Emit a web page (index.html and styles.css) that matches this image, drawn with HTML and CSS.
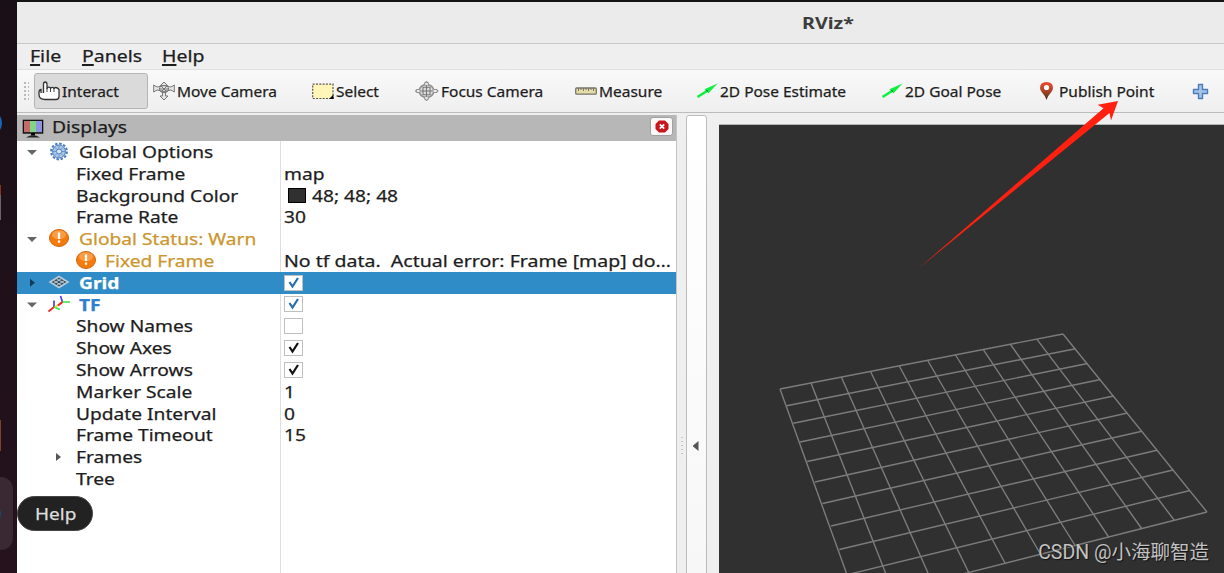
FILE: index.html
```html
<!DOCTYPE html>
<html lang="en">
<head>
    <meta charset="UTF-8">
    <meta name="viewport" content="width=device-width, initial-scale=1.0">
    <title>RViz*</title>
    <link rel="stylesheet" href="styles.css">
</head>
<body>

<div class="desktop">
    <div class="dock">
        <svg width="17" height="573">
            <circle cx="-11" cy="123" r="13" fill="#1668bd"/>
            <path d="M0 185h1v10h-1z" fill="#8a3018"/>
            <path d="M0 195h1v25h-1z" fill="#6a6468"/>
            <path d="M0 420h1v31h-1z" fill="#7c431f"/>
            <rect x="-20" y="477" width="33" height="73" rx="12" fill="#3a2933"/>
            <circle cx="-9" cy="514" r="10" fill="#174a6c"/>
        </svg>
    </div>

    <div class="window">
        <div class="titlebar"><span class="title">RViz*</span></div>
        <div class="menubar">
            <span class="menu file"><u>F</u>ile</span>
            <span class="menu panels"><u>P</u>anels</span>
            <span class="menu help"><u>H</u>elp</span>
        </div>

        <div class="toolbar">
            <span class="grip"></span>
            <div class="tool active">
                <svg width="22" height="20" viewBox="0 0 22 20"><path d="M5.500 12V3.200Q5.500 1 7.200 1T9 3.200V8Q9 6.200 10.800 6.200T12.500 8Q12.500 6.300 14.200 6.300T16 8Q16 6.500 17.700 6.500T21 8.500V15.500Q21 18.500 18 18.500H7Q1 18.500 1 13.500V11Q1 9 3 8.500V12" fill="#fff" stroke="#333" stroke-width="1.300"/><path d="M9 7v4M12.500 7.500v3.500M16 7.500v3.500" stroke="#444"/></svg>
                <span class="label">Interact</span>
            </div>
            <div class="tool">
                <svg width="22" height="20" viewBox="0 0 22 20"><g fill="#e6e6e6" stroke="#777" stroke-width="1"><path d="M11 1L15 5H12.500V15H15L11 19L7 15H9.500V5H7Z"/><path d="M.7 4V11L4 9Q11 12 18 9L21.300 11V4L18 6Q11 3 4 6Z"/><ellipse cx="11" cy="8" rx="4.500" ry="3.500" fill="none"/><path d="M6 8h10M8 5l6 6M14 5l-6 6"/></g></svg>
                <span class="label">Move Camera</span>
            </div>
            <div class="tool">
                <svg width="22" height="20" viewBox="0 0 22 20"><path d="M.7 3.200h20.300v14.300H.7z" fill="#fff6b8" stroke="#555" stroke-width="1.200" stroke-dasharray="2 1.300"/><path d="M21.500 13.500v4.500h-4.500z"/></svg>
                <span class="label">Select</span>
            </div>
            <div class="tool">
                <svg width="24" height="20" viewBox="0 0 24 20"><g fill="none" stroke="#8e8e8e" stroke-width="1.100"><ellipse cx="11.500" cy="10" rx="7.300" ry="6.500" fill="#ddd" stroke-width="1.600"/><path d="M8 6.200h7v7.600H8zM11.500 4v12M5 10h13" stroke="#777"/><path d="M9.700 4V2L11.500.6L13.300 2V4M9.700 16V18L11.500 19.400L13.300 18V16M4.500 8.500H2L.6 10L2 11.500H4.500M18.500 8.500H21.500L23 10L21.500 11.500H18.500" fill="#eee"/></g></svg>
                <span class="label">Focus Camera</span>
            </div>
            <div class="tool">
                <svg width="22" height="20" viewBox="0 0 22 20"><rect x=".7" y="7" width="20.600" height="6.200" rx="1" fill="#e6dca6" stroke="#77746c" stroke-width="1.300"/><path d="M3.500 7v3M6 7v2M8.500 7v3M11 7v2M13.500 7v3M16 7v2M18.500 7v3" stroke="#77746c"/></svg>
                <span class="label">Measure</span>
            </div>
            <div class="tool pose">
                <svg width="22" height="20" viewBox="0 0 22 20"><path d="M1.500 16L11 10" stroke="#0df03c" stroke-width="2.600"/><path d="M21.500 2.500L8.500 8.200L12.500 12.200Z" fill="#0df03c"/><path d="M9.500 9L12.300 11.600L11.500 9Z" fill="#078c28"/></svg>
                <span class="label">2D Pose Estimate</span>
            </div>
            <div class="tool pose">
                <svg width="22" height="20" viewBox="0 0 22 20"><path d="M1.500 16L11 10" stroke="#0df03c" stroke-width="2.600"/><path d="M21.500 2.500L8.500 8.200L12.500 12.200Z" fill="#0df03c"/><path d="M9.500 9L12.300 11.600L11.500 9Z" fill="#078c28"/></svg>
                <span class="label">2D Goal Pose</span>
            </div>
            <div class="tool">
                <svg width="18" height="20" viewBox="0 0 18 20"><defs><linearGradient id="pin" x2="0" y2="1"><stop stop-color="#f0492e"/><stop offset=".45" stop-color="#b44627"/><stop offset="1" stop-color="#47301d"/></linearGradient></defs><path d="M7.500 19Q6.500 15 3 11.500Q1 9.500 1 7Q1 1 7.500 1T14 7Q14 9.500 12 11.500Q8.500 15 7.500 19Z" fill="url(#pin)"/><circle cx="7.500" cy="6.500" r="2.600" fill="#fff"/></svg>
                <span class="label">Publish Point</span>
            </div>
            <div class="tool">
                <svg width="17" height="20" viewBox="0 0 17 20"><path d="M6.500 3.500h4v5h5v4h-5v5h-4v-5h-5v-4h5z" fill="#a5c4e7" stroke="#4c7db9" stroke-width="1.400" stroke-linejoin="round"/></svg>
            </div>
        </div>

        <div class="content">
            <div class="displays">
                <div class="panel-header">
                    <svg width="22" height="19" viewBox="0 0 22 19"><path d="M.7 .7h20.600v14H.7z" fill="#111"/><path d="M2 2h6v11.200H2z" fill="#c56a6a"/><path d="M8 2h6v11.200H8z" fill="#83d483"/><path d="M14 2h6v11.200h-6z" fill="#9292e2"/><path d="M9 14h4v2.500H9z"/><path d="M4 18.500Q11 14 18 18.500Z" fill="#222"/></svg>
                    <span class="label">Displays</span>
                    <span class="close"><svg width="14" height="13" viewBox="0 0 14 13"><path d="M4 .5h6l3.500 3.500v5L10 12.500H4L.5 9V4z" fill="#c9151c"/><path d="M4.800 4.300l4.400 4.400M9.200 4.300L4.800 8.700" stroke="#fff" stroke-width="1.700"/></svg></span>
                </div>
                <div class="tree">
                    <div class="row">
                        <div class="name group"><i class="down"></i>
                            <svg width="20" height="20" viewBox="0 0 20 20"><circle cx="10" cy="9.500" r="7.900" fill="none" stroke="#4c7fbd" stroke-width="2" stroke-dasharray="2.500 1.630"/><circle cx="10" cy="9.500" r="6.500" fill="#a9c4e5" stroke="#4c7fbd"/><circle cx="10" cy="9.500" r="2.500" fill="#d9e7f6" stroke="#4c7fbd"/><path d="M10 3.500v3M10 12.500v3M4 9.500h3M13 9.500h3M6 5.500l2 2M12 11.500l2 2M14 5.500l-2 2M8 11.500l-2 2" stroke="#6d98cc"/></svg>
                            <span class="text">Global Options</span></div>
                        <div class="value"></div>
                    </div>
                    <div class="row"><div class="name"><span class="text">Fixed Frame</span></div><div class="value"><span class="text">map</span></div></div>
                    <div class="row"><div class="name"><span class="text">Background Color</span></div><div class="value"><i class="swatch"></i><span class="text">48; 48; 48</span></div></div>
                    <div class="row"><div class="name"><span class="text">Frame Rate</span></div><div class="value"><span class="text">30</span></div></div>
                    <div class="row warn">
                        <div class="name group"><i class="down"></i>
                            <svg width="20" height="20" viewBox="0 0 20 20"><ellipse cx="10" cy="9" rx="9.500" ry="8.500" fill="#f57a0b" stroke="#cf650c"/><ellipse cx="10" cy="5.800" rx="7" ry="4.500" fill="#fa9c43"/><path d="M10 3.500v6.500M10 11.500v2.300" stroke="#fff" stroke-width="2.300"/></svg>
                            <span class="text">Global Status: Warn</span></div>
                        <div class="value"></div>
                    </div>
                    <div class="row warn">
                        <div class="name child">
                            <svg width="20" height="20" viewBox="0 0 20 20"><ellipse cx="10" cy="9" rx="9.500" ry="8.500" fill="#f57a0b" stroke="#cf650c"/><ellipse cx="10" cy="5.800" rx="7" ry="4.500" fill="#fa9c43"/><path d="M10 3.500v6.500M10 11.500v2.300" stroke="#fff" stroke-width="2.300"/></svg>
                            <span class="text">Fixed Frame</span></div>
                        <div class="value"><span class="text message">No tf data.&nbsp; Actual error: Frame [map] do…</span></div>
                    </div>
                    <div class="row selected">
                        <div class="name group"><i class="right"></i>
                            <svg width="20" height="20" viewBox="0 0 20 20"><path d="M10 3.500L19 9L10 14.500L1 9Z" fill="#3d4f5b" stroke="#b6cbd9" stroke-width="1.600"/><path d="M7 5.300L16 10.800M4 7.200L13 12.700M13 5.300L4 10.800M16 7.200L7 12.700" stroke="#b6cbd9"/></svg>
                            <span class="text bold">Grid</span></div>
                        <div class="value"><span class="check blue"><svg width="14" height="12" viewBox="0 0 14 12"><path d="M2.500 5L5.500 9.500L11 1" fill="none" stroke="currentColor" stroke-width="2.200"/></svg></span></div>
                    </div>
                    <div class="row tf">
                        <div class="name group"><i class="down"></i>
                            <svg width="22" height="20" viewBox="0 0 22 20"><g fill="none" stroke-width="1.700"><path d="M6 13L.5 17.500" stroke="#e22"/><path d="M6 13V6.500M14.500 8L12.500 2" stroke="#4444e8"/><path d="M6 13L12 15.500M14.500 8H22" stroke="#31e545"/><path d="M7 13L14.500 8" stroke="#f2d43c"/><path d="M10 11.500L14.500 8" stroke="#e22" stroke-width="2"/></g></svg>
                            <span class="text bold">TF</span></div>
                        <div class="value"><span class="check blue"><svg width="14" height="12" viewBox="0 0 14 12"><path d="M2.500 5L5.500 9.500L11 1" fill="none" stroke="currentColor" stroke-width="2.200"/></svg></span></div>
                    </div>
                    <div class="row"><div class="name"><span class="text">Show Names</span></div><div class="value"><span class="check"></span></div></div>
                    <div class="row"><div class="name"><span class="text">Show Axes</span></div><div class="value"><span class="check"><svg width="14" height="12" viewBox="0 0 14 12"><path d="M2.500 5L5.500 9.500L11 1" fill="none" stroke="currentColor" stroke-width="2.200"/></svg></span></div></div>
                    <div class="row"><div class="name"><span class="text">Show Arrows</span></div><div class="value"><span class="check"><svg width="14" height="12" viewBox="0 0 14 12"><path d="M2.500 5L5.500 9.500L11 1" fill="none" stroke="currentColor" stroke-width="2.200"/></svg></span></div></div>
                    <div class="row"><div class="name"><span class="text">Marker Scale</span></div><div class="value"><span class="text">1</span></div></div>
                    <div class="row"><div class="name"><span class="text">Update Interval</span></div><div class="value"><span class="text">0</span></div></div>
                    <div class="row"><div class="name"><span class="text">Frame Timeout</span></div><div class="value"><span class="text">15</span></div></div>
                    <div class="row"><div class="name nested"><i class="right"></i><span class="text">Frames</span></div><div class="value"></div></div>
                    <div class="row"><div class="name"><span class="text">Tree</span></div><div class="value"></div></div>
                    <div class="row rest"><div class="name"></div><div class="value"></div></div>
                </div>
            </div>
            <div class="splitter"><span class="dots"></span></div>
            <div class="collapse"><i class="left"></i></div>
            <div class="view">
                <svg width="505" height="448" viewBox="719 125 505 448">
                    <g class="grid-lines">
                        <path d="M780 389L1063 334M786.700 405.700L1075.500 348.700M793.300 423.300L1087.500 363.500M800 442L1100.500 379.500M807.200 461.500L1113.500 396M815 482L1127.500 413M822.500 503.500L1142 431.200M831 526L1157 450.200M839.300 549.500L1173 470M848 574.500L1190 490.500M856.500 601L1207 512"/>
                        <path d="M780 389L856.500 601M811 383L893 592M841.300 377L932 582M870.500 371.500L969 573M899.300 366L1005.500 564M927.700 360.500L1041 555M955.500 355L1075.500 546M983.300 349.700L1109 537.500M1010.500 344.500L1142 529M1037 339.300L1174.500 520.500M1063 334L1207 512"/>
                    </g>
                </svg>
                <div class="watermark">CSDN @小海聊智造</div>
            </div>
        </div>
    </div>

    <div class="tooltip"><span class="label">Help</span></div>
    <svg class="arrow" width="202" height="170" viewBox="918 99 202 170"><path d="M918.500 268.500L1103.500 108.300L1097.700 104.700L1118 101L1111 120.500L1109.500 113Z" fill="#ff2010"/></svg>
</div>

</body>
</html>
```
FILE: styles.css
```css
body {
    margin: 0;
    font-family: "Noto Sans", "Open Sans", sans-serif;
    color: #1d1d1d;
    background-color: #1c0f17;
}
svg {
    display: block;
    flex: none;
}
.desktop {
    position: relative;
    display: flex;
    width: 1224px;
    height: 573px;
    overflow: hidden;
}
.dock {
    width: 17px;
    background: linear-gradient(#190f17, #25121d);
}
.window {
    display: flex;
    flex-direction: column;
    width: 1207px;
    border-top: 2px solid #151515;
    box-sizing: border-box;
    background-color: #efefef;
}
.titlebar {
    height: 41px;
    padding-left: 785px;
    line-height: 42px;
    background-color: #ebebeb;
    border-bottom: 1px solid #c9c9c9;
}
.title {
    display: inline-block;
    font-size: 16px;
    font-weight: bold;
    color: #3d3d3d;
    transform: scaleX(1.23);
    transform-origin: left;
}
.menubar {
    display: grid;
    grid-template-columns: 52px 80px 60px;
    padding-left: 13px;
    height: 25px;
    line-height: 24px;
    font-size: 16.5px;
    background-color: #efefef;
    border-bottom: 1px solid #e0e0e0;
}
.menu {
    transform: scaleX(1.18);
    transform-origin: left;
    white-space: nowrap;
}
.menu, .label, .text {
    -webkit-text-stroke: 0.25px currentColor;
}
.menu u {
    text-decoration-thickness: 2px;
    text-underline-offset: 2px;
}
.toolbar {
    display: grid;
    grid-template-columns: 17px 115px 159px 103px 160px 121px 185px 158px 153px 36px;
    align-items: center;
    height: 42px;
    background: linear-gradient(#f9f9f9, #efefef);
    border-bottom: 1px solid #bcbcbc;
}
.grip {
    width: 6px;
    height: 20px;
    margin-left: 6px;
    background-image: radial-gradient(circle, #bbb 0.8px, transparent 1px);
    background-size: 4px 4px;
}
.tool {
    display: flex;
    align-items: center;
    gap: 2px;
    height: 34px;
    padding-left: 4px;
}
.tool.active {
    width: 114px;
    height: 36px;
    box-sizing: border-box;
    padding-left: 3px;
    background-color: #dadada;
    border: 1px solid #b5b5b5;
    border-radius: 3px;
}
.tool .label {
    font-size: 14.8px;
    white-space: nowrap;
    transform: scaleX(1.045);
    transform-origin: left;
}
.content {
    display: flex;
    flex: 1;
    min-height: 0;
    padding-top: 2px;
}
.displays {
    width: 659px;
    border-right: 1px solid #c3c3c3;
    background-color: #fff;
}
.panel-header {
    display: flex;
    align-items: center;
    gap: 8px;
    height: 26px;
    padding: 0 3px 0 5px;
    background-color: #b7b7b7;
}
.panel-header .label {
    font-size: 16.5px;
    line-height: 22px;
    padding-bottom: 2px;
    transform: scaleX(1.17);
    transform-origin: left;
}
.close {
    display: flex;
    align-items: center;
    justify-content: center;
    width: 21px;
    height: 17px;
    margin: 0 0 3px auto;
    background-color: #f9f9f9;
    border: 1px solid #a0a0a0;
    border-radius: 3px;
}
.tree {
    font-size: 16.4px;
}
.row {
    display: flex;
    height: 21.8px;
}
.name {
    display: flex;
    align-items: center;
    box-sizing: border-box;
    width: 264px;
    padding-left: 59px;
    border-right: 1px solid #dedede;
}
.group {
    padding-left: 9px;
}
.group svg {
    width: 22px;
    margin: 0 9px 0 10px;
}
.child svg {
    margin-right: 9px;
}
.nested {
    padding-left: 35px;
}
.nested .right {
    margin-right: 12px;
}
.text {
    line-height: 21.8px;
    white-space: nowrap;
    transform: scaleX(1.17);
    transform-origin: left;
}
.message {
    transform: scaleX(1.19);
}
.bold {
    font-weight: bold;
}
.value {
    display: flex;
    align-items: center;
    padding-left: 3px;
}
.warn .name {
    color: #cb962d;
}
.tf .name {
    color: #2f7fd0;
}
.selected {
    background-color: #308cc6;
}
.selected .name {
    color: #fff;
    border-color: #308cc6;
}
.rest {
    height: 90px;
}
.down, .right {
    width: 12px;
    height: 12px;
    background-color: #666;
    clip-path: polygon(1px 4px, 11px 4px, 6px 9px);
}
.right {
    background-color: #555;
    clip-path: polygon(4px 2px, 9px 6px, 4px 10px);
}
.selected .right {
    background-color: #163c55;
}
.swatch {
    width: 16px;
    height: 13px;
    margin: 0 6px 0 4px;
    background-color: #303030;
    border: 1px solid #000;
}
.check {
    display: flex;
    align-items: center;
    justify-content: center;
    width: 17px;
    height: 14px;
    background-color: #fff;
    border: 1px solid #bfbfbf;
    color: #111;
}
.check.blue {
    color: #286eae;
}
.splitter {
    display: flex;
    align-items: center;
    justify-content: center;
    width: 9px;
    height: 100%;
}
.dots {
    width: 2px;
    height: 20px;
    margin-top: 206px;
    background: repeating-linear-gradient(#c5c5c5 0 1px, transparent 1px 4px);
}
.collapse {
    display: flex;
    justify-content: center;
    box-sizing: border-box;
    width: 21px;
    height: 470px;
    padding: 325px 2px 0 0;
    background: linear-gradient(#fff, #f7f7f7);
    border: 1px solid #bcbcbc;
    border-radius: 3px;
}
.left {
    width: 6px;
    height: 10px;
    background-color: #555;
    clip-path: polygon(0 50%, 100% 0, 100% 100%);
}
.view {
    position: relative;
    width: 505px;
    height: 448px;
    margin: 9px 0 0 12px;
    border-top: 1px solid #b5b5b5;
    background-color: #303030;
}
.grid-lines {
    fill: none;
    stroke: #7c7c7c;
    stroke-width: 1.4;
}
.watermark {
    position: absolute;
    right: 15px;
    bottom: 5px;
    font-family: Roboto, "Noto Sans CJK SC", sans-serif;
    font-size: 19.5px;
    line-height: 30px;
    white-space: nowrap;
    color: #c2c2c2;
    text-shadow: 1px 1px 1px #111;
}
.tooltip {
    position: absolute;
    left: 17px;
    top: 496px;
    width: 76px;
    height: 35px;
    padding-left: 17px;
    box-sizing: border-box;
    border: 1px solid #444;
    border-radius: 18px;
    background-color: #222;
    color: #ddd;
    font-size: 16.5px;
    line-height: 33px;
}
.tooltip .label {
    display: inline-block;
    transform: scaleX(1.15);
    transform-origin: left;
}
.arrow {
    position: absolute;
    left: 918px;
    top: 99px;
}
```
